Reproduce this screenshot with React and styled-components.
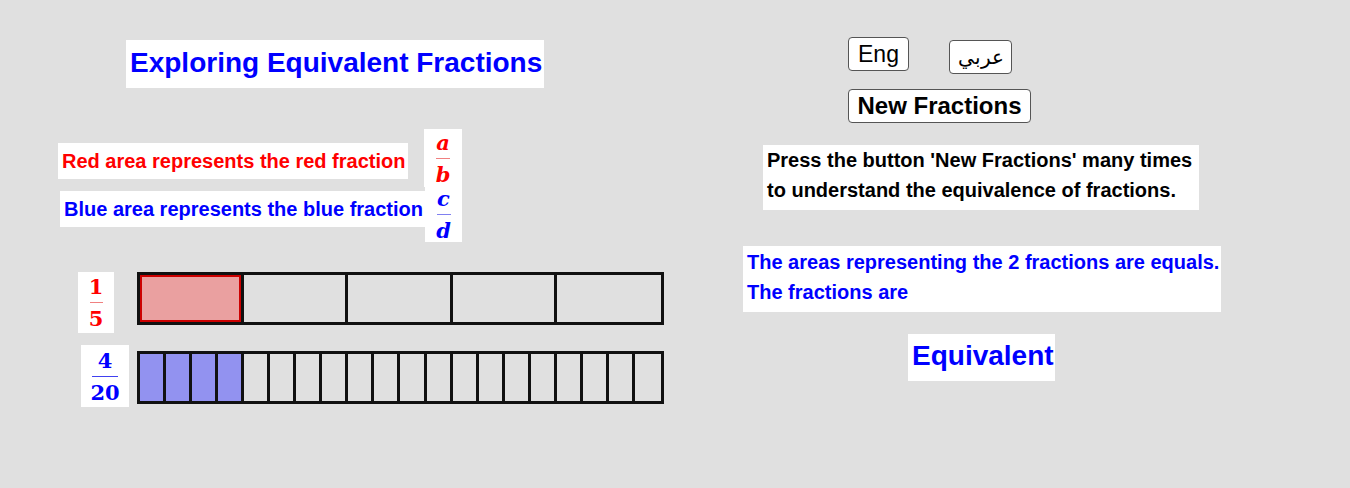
import React from "react";
import styled, { createGlobalStyle } from "styled-components";

const GlobalStyle = createGlobalStyle`
html, body {
  margin: 0;
  padding: 0;
  background: #e0e0e0;
  font-family: "Liberation Sans", Arial, sans-serif;
}
`;

const Canvas = styled.div`
width: 1350px;
height: 488px;
display: flex;
overflow: hidden;
background: #e0e0e0;
`;

const LeftPane = styled.div`
width: 743px;
display: flex;
flex-direction: column;
align-items: flex-start;
`;

const RightPane = styled.div`
flex: 1;
display: flex;
flex-direction: column;
align-items: flex-start;
`;

const TextBox = styled.div`
background: #fff;
color: ${props => props.color || '#000'};
font-weight: bold;
font-size: ${props => props.size || 20}px;
line-height: ${props => props.lineHeight || 36}px;
padding: 0 4px;
white-space: nowrap;
box-sizing: border-box;
`;

const Title = styled(TextBox)`
margin: 40px 0 0 126px;
width: 418px;
height: 48px;
line-height: 45px;
`;

const Legend = styled.div`
display: flex;
align-items: flex-start;
margin: 41px 0 0 58px;
`;

const LegendLabels = styled.div`
width: 367px;
display: flex;
flex-direction: column;
align-items: flex-start;
`;

const Label = styled(TextBox)`
width: ${props => props.w}px;
margin: ${props => props.margin};
`;

const FractionStack = styled.div`
display: flex;
flex-direction: column;
`;

const FracBox = styled.div`
background: #fff;
display: flex;
flex-direction: column;
align-items: center;
justify-content: center;
width: ${props => props.w}px;
height: ${props => props.h}px;
margin-left: ${props => props.offset || 0}px;
color: ${props => props.color};
font-family: "DejaVu Serif", "Liberation Serif", serif;
font-weight: bold;
font-style: ${props => props.italic ? 'italic' : 'normal'};
font-size: 21px;
line-height: 21px;
`;

const FracLine = styled.div`
width: ${props => props.w}px;
height: 1px;
margin: 5px 0 5px;
background: ${props => props.color};
`;

const BarRow = styled.div`
display: flex;
align-items: flex-start;
margin: ${props => props.margin};
`;

const Bar = styled.div`
display: grid;
grid-template-columns: repeat(${props => props.parts}, 1fr);
width: 527px;
height: 53px;
box-sizing: border-box;
border: 3px solid #111;
margin: ${props => props.margin};
`;

const Cell = styled.div`
background: ${props => props.fill || 'transparent'};
border-right: 3px solid #111;
box-shadow: ${props => props.edge ? `inset 0 0 0 2px ${props.edge}` : 'none'};
&:last-child {
  border-right: none;
}
`;

const ButtonRow = styled.div`
display: flex;
align-items: flex-start;
gap: 40px;
margin: 37px 0 0 105px;
`;

const Button = styled.button`
background: #fff;
border: 1px solid #555;
border-radius: 4px;
width: ${props => props.w}px;
height: 34px;
padding: 0;
font-family: "Liberation Sans", Arial, "Noto Sans", sans-serif;
font-size: ${props => props.size || 23}px;
font-weight: ${props => props.bold ? 'bold' : 'normal'};
color: #000;
margin: ${props => props.margin || 0};
line-height: 30px;
cursor: pointer;
`;

const Hint = styled(TextBox)`
width: ${props => props.w}px;
line-height: 30px;
padding: ${props => props.top || 0}px 4px 5px;
margin: ${props => props.margin};
`;

const Verdict = styled(TextBox)`
margin: 22px 0 0 165px;
width: 147px;
height: 47px;
line-height: 44px;
`;

function FractionBar({ parts, filled, fill, edge, margin }) {
  return (
    <Bar parts={parts} margin={margin}>
      {Array.from({ length: parts }, (_, i) => (
        <Cell key={i} fill={i < filled ? fill : null} edge={i < filled ? edge : null} />
      ))}
    </Bar>
  );
}

export default function App() {
  return (
    <>
      <GlobalStyle />
      <Canvas>
        <LeftPane>
          <Title color="#0000ff" size={28}>Exploring Equivalent Fractions</Title>
          <Legend>
            <LegendLabels>
              <Label color="#ff0000" w={350} margin="14px 0 0 0">Red area represents the red fraction</Label>
              <Label color="#0000ff" w={365} margin="12px 0 0 2px">Blue area represents the blue fraction</Label>
            </LegendLabels>
            <FractionStack>
              <FracBox w={38} h={58} color="#ff0000" italic offset={-1}>
                <span>a</span>
                <FracLine w={14} color="#f08080" />
                <span>b</span>
              </FracBox>
              <FracBox w={37} h={55} color="#0000ff" italic>
                <span>c</span>
                <FracLine w={14} color="#8080f0" />
                <span>d</span>
              </FracBox>
            </FractionStack>
          </Legend>
          <BarRow margin="30px 0 0 78px">
            <FracBox w={36} h={61} color="#ff0000">
              <span>1</span>
              <FracLine w={13} color="#f08080" />
              <span>5</span>
            </FracBox>
            <FractionBar parts={5} filled={1} fill="#eaa0a0" edge="#cc0000" margin="0 0 0 23px" />
          </BarRow>
          <BarRow margin="12px 0 0 81px">
            <FracBox w={48} h={62} color="#0000ff">
              <span>4</span>
              <FracLine w={26} color="#4040f0" />
              <span>20</span>
            </FracBox>
            <FractionBar parts={20} filled={4} fill="#9292f0" margin="6px 0 0 8px" />
          </BarRow>
        </LeftPane>
        <RightPane>
          <ButtonRow>
            <Button w={61}>Eng</Button>
            <Button w={63} size={20} margin="3px 0 0 0">عربي</Button>
          </ButtonRow>
          <Button bold w={183} size={24} margin="15px 0 0 105px">New Fractions</Button>
          <Hint w={436} margin="22px 0 0 20px">
            Press the button 'New Fractions' many times<br />
            to understand the equivalence of fractions.
          </Hint>
          <Hint color="#0000ff" w={478} top={1} margin="36px 0 0 0">
            The areas representing the 2 fractions are equals.<br />
            The fractions are
          </Hint>
          <Verdict color="#0000ff" size={28}>Equivalent</Verdict>
        </RightPane>
      </Canvas>
    </>
  );
}
